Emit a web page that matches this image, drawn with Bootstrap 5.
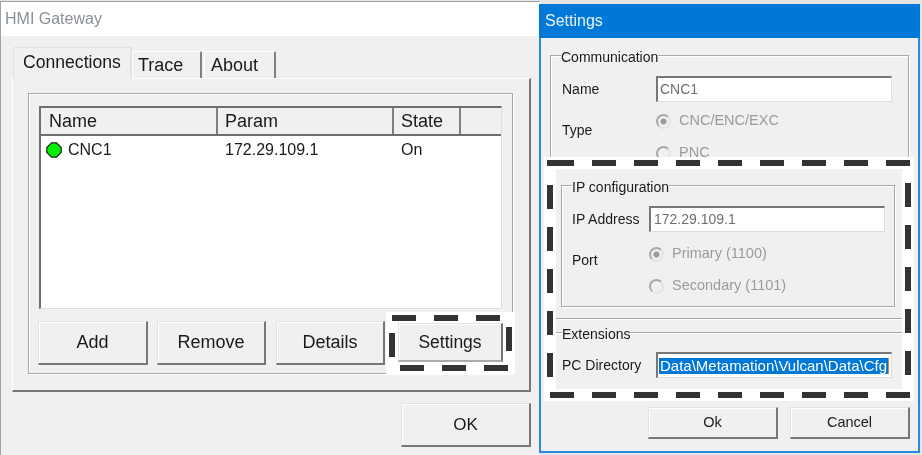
<!DOCTYPE html>
<html lang="en">
<head>
  <meta charset="UTF-8">
  <title>HMI Gateway</title>
  <link rel="stylesheet" href="https://cdn.jsdelivr.net/npm/bootstrap@5.3.2/dist/css/bootstrap.min.css">
  <style>
    html, body { height: 100%; overflow: hidden; }
    body { background: #e4e5e6; font-family: "Liberation Sans", Arial, sans-serif; font-size: 16px; color: #1a1a1a; position: relative; }
    /* windows on the desktop */
    .win-main { position: absolute; left: 0; top: 1px; width: 540px; height: 454px; background: #f0f0f0; border-top: 1px solid #9aa2aa; border-left: 1px solid #9aa2aa; filter: blur(.35px); }
    .win-settings { position: absolute; left: 539px; top: 4px; width: 381px; height: 449px; background: #f0f0f0; border: 2px solid #2b8ae0; border-top: 0; display: flex; flex-direction: column; filter: blur(.35px); }
    .title-main { height: 34px; background: #fff; color: #8b8f96; font-size: 16px; line-height: 33px; padding-left: 4px; }
    .title-settings { height: 34px; background: #0078d7; color: #e8f2fb; font-size: 16px; line-height: 34px; padding-left: 6px; margin: 0 -2px; flex: none; }

    /* tabs */
    .tabs-strip { margin: 11px 0 0 12px; height: 31px; align-items: flex-end; gap: 2px; border: 0; flex-wrap: nowrap; }
    .tabs-strip .nav-link { background: #f0f0f0; color: #1a1a1a; font-size: 18px; line-height: 26px; height: 27px; padding: 0 0 0 5px; width: 70px; border: 0; border-top: 1px solid #fff; border-left: 1px solid #fff; border-right: 2px solid #808080; border-radius: 2px 2px 0 0; margin: 0; }
    .tabs-strip .nav-item:last-child .nav-link { width: 72px; padding-left: 6px; }
    .tabs-strip .nav-link.active { background: #f0f0f0; color: #1a1a1a; font-size: 17.6px; height: 32px; line-height: 29px; padding: 0 0 0 9px; width: 119px; margin: 0 -2px -1px 0; position: relative; }
    .tab-pane-box { margin-left: 11px; width: 519px; height: 314px; border-top: 1px solid #fff; border-left: 1px solid #fff; border-right: 2px solid #777; border-bottom: 2px solid #777; padding: 14px 0 0 15px; }
    .inner-box { width: 485px; height: 281px; border: 1px solid #a8a8a8; box-shadow: inset 1px 1px 0 #fff, 1px 1px 0 #fff; padding: 12px 0 0 10px; }

    /* connection list */
    .conn-list { width: 463px; height: 203px; background: #fff; border-top: 2px solid #6e6e6e; border-left: 2px solid #6e6e6e; border-right: 1px solid #ddd; border-bottom: 1px solid #ddd; overflow: hidden; }
    .conn-table { table-layout: fixed; width: 461px; margin: 0; color: #1a1a1a; }
    .conn-table th, .conn-table td { font-size: 16px; font-weight: 400; border: 0; padding: 0 0 0 8px; box-shadow: none; background: transparent; color: #1a1a1a; }
    .conn-table th { font-size: 18px; height: 27px; line-height: 26px; background: #f0f0f0; border-right: 2px solid #808080; border-bottom: 2px solid #6e6e6e; padding-left: 7px; border-left: 1px solid #fff; }
    .conn-table th:first-child { padding-left: 8px; border-left: 0; }
    .conn-table th:last-child { border-right: 0; }
    .conn-table td { height: 27px; line-height: 27px; vertical-align: middle; }
    .conn-table td:first-child { padding-left: 5px; }
    .state-dot { width: 16px; height: 16px; margin-right: 6px; vertical-align: -3px; }

    /* buttons */
    .win-btn { background: #f0f0f0; color: #1a1a1a; font-size: 18px; padding: 0; border-radius: 0; border: 0; border-top: 1px solid #e2e2e2; border-left: 1px solid #e2e2e2; border-right: 2px solid #777; border-bottom: 2px solid #777; box-shadow: inset 1px 1px 0 #fff; }
    .btn-row { margin-top: 12px; margin-left: -1px; align-items: flex-start; }
    .btn-add { width: 110px; height: 44px; margin-right: 9px; flex: none; }
    .btn-std { width: 109px; height: 44px; margin-right: 10px; flex: none; }
    .btn-std:last-of-type { margin-right: 0; }
    .btn-ok-main { width: 130px; height: 44px; margin: 11px 0 0 400px; display: block; font-size: 17px; }
    .settings-mark { position: relative; width: 129px; height: 62px; margin: -9px 0 0 1px; background: #fff; padding: 11px 12px; flex: none; }
    .btn-settings { width: 105px; height: 39px; display: block; font-size: 17.5px; border-bottom-color: #aaa; }
    .dash-art { position: absolute; left: 0; top: 0; pointer-events: none; }
    .dash-art line { stroke: #333; stroke-width: 6; stroke-dasharray: 24 18; }
    .dash-small { width: 129px; height: 62px; }
    .dash-big { width: 378px; height: 447px; z-index: 3; }

    /* settings dialog */
    .dlg-group { border: 1px solid #a8a8a8; box-shadow: inset 1px 1px 0 #fff, 1px 1px 0 #fff; padding: 0; margin: 0; min-width: 0; }
    .dlg-group legend { float: none; width: auto; font-size: 14px; line-height: 18px; margin: 0 0 0 10px; padding: 4px 0 0; color: #1a1a1a; }
    .group-comm { margin: 6px 9px 0 9px; height: 130px; flex: none; }
    .field-row { display: flex; align-items: center; }
    .field-label { font-size: 14px; color: #1a1a1a; flex: none; }
    .win-input { background: #fff; border: 0; border-top: 2px solid #777; border-left: 2px solid #777; border-right: 1px solid #ddd; border-bottom: 1px solid #ddd; border-radius: 0; color: #6f6f6f; font-size: 14px; padding: 0 2px 2px; box-shadow: none; min-height: 0; }
    .win-input:disabled, .win-input[readonly] { background: #fff; opacity: 1; }
    .radio-row { display: flex; align-items: center; color: #9b9b9b; font-size: 14.5px; height: 32px; }
    .radio-mark { width: 15px; height: 15px; border-radius: 50%; border: 2px solid #a8a8a8; border-right-color: #e4e4e4; border-bottom-color: #e4e4e4; margin-right: 8px; flex: none; background: #f0f0f0; }
    .radio-mark.on { background: radial-gradient(circle, #9a9a9a 0 2.5px, #f0f0f0 3.5px); }
    .comm-name { margin: 10px 0 0 11px; }
    .comm-name .field-label { width: 94px; }
    .comm-name .win-input { width: 236px; height: 26px; }
    .comm-type { margin: 3px 0 0 11px; display: flex; align-items: flex-start; }
    .comm-type .field-label { width: 94px; margin-top: 15px; }

    .ip-mark { position: absolute; left: 3px; top: 153px; width: 370px; height: 244px; background: #f0f0f0; border: solid #fff; border-width: 12px; z-index: 2; }
    .mark-body { position: relative; padding: 5px 7px 0 5px; height: 220px; }
    .group-ip { height: 133px; }
    .ip-row { margin: 10px 0 0 10px; }
    .ip-row .field-label { width: 77px; }
    .ip-row .win-input { width: 236px; height: 26px; padding-left: 3px; }
    .port-row { display: flex; margin: 6px 0 0 10px; }
    .port-row .field-label { width: 77px; margin-top: 12px; }
    .ext-lines { height: 15px; margin: 11px -7px 0 -5px; border-top: 1px solid #a8a8a8; border-bottom: 1px solid #a8a8a8; box-shadow: inset 0 1px 0 #fff, 0 1px 0 #fff; }
    .ext-title { display: block; width: fit-content; font-size: 14px; line-height: 18px; margin: -8px 0 0 1px; background: #f0f0f0; position: relative; }
    .pc-row { margin-top: 9px; }
    .pc-row .field-label { width: 94px; margin-left: 1px; }
    .pc-path { width: 236px; height: 26px; background: #fff; border-top: 2px solid #777; border-left: 2px solid #777; border-right: 1px solid #ddd; border-bottom: 1px solid #ddd; padding: 4px 1px; overflow: hidden; }
    .pc-path span { display: block; width: 230px; background: #0078d7; color: #fff; font-size: 15px; line-height: 16px; white-space: nowrap; overflow: hidden; height: 16px; padding-left: 1px; border-right: 1px solid #e8862a; }
    .dlg-footer { margin-top: auto; margin-bottom: 12px; display: flex; justify-content: flex-end; gap: 12px; padding-right: 8px; }
    .dlg-footer .win-btn { font-size: 14.5px; }
    .btn-dlg-ok { width: 130px; height: 32px; }
    .btn-dlg-cancel { width: 120px; height: 32px; }
  </style>
</head>
<body>

<!-- Main window -->
<div class="win-main">
  <div class="title-main">HMI Gateway</div>

  <ul class="nav nav-tabs tabs-strip">
    <li class="nav-item"><a class="nav-link active" href="#">Connections</a></li>
    <li class="nav-item"><a class="nav-link" href="#">Trace</a></li>
    <li class="nav-item"><a class="nav-link" href="#">About</a></li>
  </ul>

  <div class="tab-pane-box">
    <div class="inner-box">
      <div class="conn-list">
        <table class="table conn-table">
          <colgroup><col style="width:176px"><col style="width:176px"><col style="width:67px"><col></colgroup>
          <thead>
            <tr><th>Name</th><th>Param</th><th>State</th><th></th></tr>
          </thead>
          <tbody>
            <tr>
              <td>
                <svg class="state-dot" viewBox="0 0 16 16"><polygon points="5.5,.8 10.5,.8 15.2,5.5 15.2,10.5 10.5,15.2 5.5,15.2 .8,10.5 .8,5.5" fill="#00f000" stroke="#222" stroke-width="1.2"/></svg>CNC1
              </td>
              <td>172.29.109.1</td>
              <td>On</td>
              <td></td>
            </tr>
          </tbody>
        </table>
      </div>

      <div class="d-flex btn-row">
        <button class="btn win-btn btn-add">Add</button>
        <button class="btn win-btn btn-std">Remove</button>
        <button class="btn win-btn btn-std">Details</button>
        <div class="settings-mark">
          <button class="btn win-btn btn-settings">Settings</button>
          <svg class="dash-art dash-small" viewBox="0 0 129 62">
            <line x1="6" y1="6" x2="114" y2="6"/>
            <line x1="14" y1="56" x2="122" y2="56"/>
            <line x1="6" y1="21" x2="6" y2="45"/>
            <line x1="123" y1="15" x2="123" y2="39"/>
          </svg>
        </div>
      </div>
    </div>
  </div>

  <button class="btn win-btn btn-ok-main">OK</button>
</div>

<!-- Settings dialog -->
<div class="win-settings">
  <div class="title-settings">Settings</div>

  <fieldset class="dlg-group group-comm">
    <legend>Communication</legend>
    <div class="field-row comm-name">
      <span class="field-label">Name</span>
      <input class="form-control win-input" value="CNC1" readonly>
    </div>
    <div class="comm-type">
      <span class="field-label">Type</span>
      <div>
        <div class="radio-row"><span class="radio-mark on"></span>CNC/ENC/EXC</div>
        <div class="radio-row"><span class="radio-mark"></span>PNC</div>
      </div>
    </div>
  </fieldset>

  <!-- Highlighted part lies over the Communication group -->
  <div class="ip-mark">
    <div class="mark-body">
      <fieldset class="dlg-group group-ip">
        <legend>IP configuration</legend>
        <div class="field-row ip-row">
          <span class="field-label">IP Address</span>
          <input class="form-control win-input" value="172.29.109.1" readonly>
        </div>
        <div class="port-row">
          <span class="field-label">Port</span>
          <div>
            <div class="radio-row"><span class="radio-mark on"></span>Primary (1100)</div>
            <div class="radio-row"><span class="radio-mark"></span>Secondary (1101)</div>
          </div>
        </div>
      </fieldset>
      <div class="ext-lines"></div>
      <div class="ext-title">Extensions</div>
      <div class="field-row pc-row">
        <span class="field-label">PC Directory</span>
        <div class="pc-path"><span>Data\Metamation\Vulcan\Data\Cfg</span></div>
      </div>
    </div>
  </div>
  <svg class="dash-art dash-big" viewBox="0 0 378 447">
    <line x1="6" y1="159" x2="9" y2="159"/>
    <line x1="9" y1="159" x2="369" y2="159"/>
    <line x1="9" y1="391" x2="369" y2="391"/>
    <line x1="9" y1="181" x2="9" y2="373"/>
    <line x1="367" y1="179" x2="367" y2="371"/>
  </svg>

  <div class="dlg-footer">
    <button class="btn win-btn btn-dlg-ok">Ok</button>
    <button class="btn win-btn btn-dlg-cancel">Cancel</button>
  </div>
</div>

<script src="https://cdn.jsdelivr.net/npm/bootstrap@5.3.2/dist/js/bootstrap.bundle.min.js"></script>
</body>
</html>
